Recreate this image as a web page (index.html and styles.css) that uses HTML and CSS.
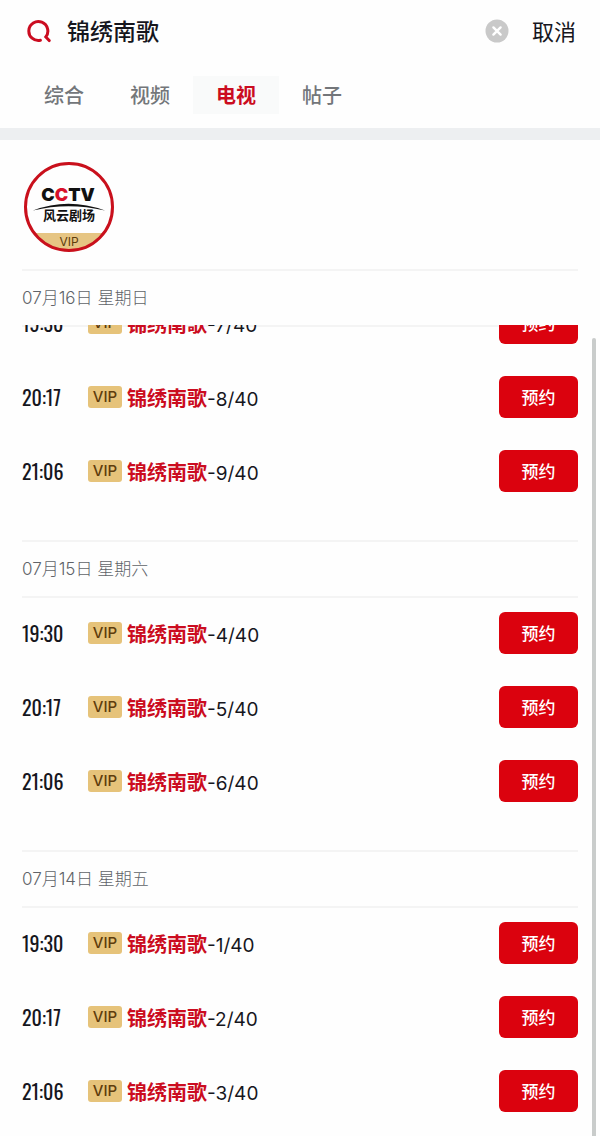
FILE: index.html
```html
<!DOCTYPE html>
<html lang="zh-CN">
<head>
    <meta charset="UTF-8">
    <meta name="viewport" content="width=device-width, initial-scale=1.0">
    <title>锦绣南歌</title>
    <link rel="stylesheet" href="styles.css">
</head>
<body>
    <div class="main">
        <form class="search">
            <label class="search-icon" for="keyword" aria-label="搜索">
                <svg width="24" height="24" viewBox="0 0 24 24" fill="none" stroke="#cb0c20" stroke-width="3" stroke-linecap="round">
                    <path d="M13.4 21.3A9.5 9.5 0 1 1 18.8 17.9L22.2 21.6"/>
                </svg>
            </label>
            <input class="keyword" id="keyword" type="text" value="锦绣南歌">
            <button class="clear" type="reset" aria-label="清除">
                <svg width="24" height="24" viewBox="0 0 24 24">
                    <circle cx="12" cy="12" r="11.5" fill="#c9c9c9"/>
                    <path d="M8.4 8.4L15.6 15.6M15.6 8.4L8.4 15.6" stroke="#fff" stroke-width="2.4" stroke-linecap="round"/>
                </svg>
            </button>
            <button class="cancel" type="button">取消</button>
        </form>

        <nav class="tabs">
            <a class="tab" href="#">综合</a>
            <a class="tab" href="#">视频</a>
            <a class="tab active" href="#">电视</a>
            <a class="tab" href="#">帖子</a>
        </nav>

        <div class="channels">
            <a class="channel" href="#" aria-label="CCTV风云剧场">
                <svg width="90" height="90" viewBox="0 0 90 90">
                    <clipPath id="round"><circle cx="45" cy="45" r="44"/></clipPath>
                    <rect y="71" width="90" height="19" fill="#e6c583" clip-path="url(#round)"/>
                    <circle cx="45" cy="45" r="43.5" fill="none" stroke="#c9101c" stroke-width="3"/>
                    <text class="cctv" x="44" y="39">C<tspan class="red">C</tspan>TV</text>
                    <path d="M9 48.5Q44 35 81 48.5Q44 40 9 48.5Z" fill="#111"/>
                    <text class="channel-name" x="45" y="58">风云剧场</text>
                    <text class="channel-vip" x="45" y="84">VIP</text>
                </svg>
            </a>
        </div>

        <div class="schedule">
            <section class="day current">
                <h2 class="date">07月16日 星期日</h2>
                <ul class="programs">
                    <li class="program">
                        <span class="time">19:30</span><span class="vip">VIP</span>
                        <span class="title"><em>锦绣南歌</em>-7/40</span>
                        <button class="book">预约</button>
                    </li>
                    <li class="program">
                        <span class="time">20:17</span><span class="vip">VIP</span>
                        <span class="title"><em>锦绣南歌</em>-8/40</span>
                        <button class="book">预约</button>
                    </li>
                    <li class="program">
                        <span class="time">21:06</span><span class="vip">VIP</span>
                        <span class="title"><em>锦绣南歌</em>-9/40</span>
                        <button class="book">预约</button>
                    </li>
                </ul>
            </section>
            <section class="day">
                <h2 class="date">07月15日 星期六</h2>
                <ul class="programs">
                    <li class="program">
                        <span class="time">19:30</span><span class="vip">VIP</span>
                        <span class="title"><em>锦绣南歌</em>-4/40</span>
                        <button class="book">预约</button>
                    </li>
                    <li class="program">
                        <span class="time">20:17</span><span class="vip">VIP</span>
                        <span class="title"><em>锦绣南歌</em>-5/40</span>
                        <button class="book">预约</button>
                    </li>
                    <li class="program">
                        <span class="time">21:06</span><span class="vip">VIP</span>
                        <span class="title"><em>锦绣南歌</em>-6/40</span>
                        <button class="book">预约</button>
                    </li>
                </ul>
            </section>
            <section class="day">
                <h2 class="date">07月14日 星期五</h2>
                <ul class="programs">
                    <li class="program">
                        <span class="time">19:30</span><span class="vip">VIP</span>
                        <span class="title"><em>锦绣南歌</em>-1/40</span>
                        <button class="book">预约</button>
                    </li>
                    <li class="program">
                        <span class="time">20:17</span><span class="vip">VIP</span>
                        <span class="title"><em>锦绣南歌</em>-2/40</span>
                        <button class="book">预约</button>
                    </li>
                    <li class="program">
                        <span class="time">21:06</span><span class="vip">VIP</span>
                        <span class="title"><em>锦绣南歌</em>-3/40</span>
                        <button class="book">预约</button>
                    </li>
                </ul>
            </section>
            <div class="scrollbar"></div>
        </div>
    </div>
</body>
</html>
```
FILE: styles.css
```css
*
{
    box-sizing: border-box;
    margin: 0;
    padding: 0;
}
body
{
    background: #fefefe;
    color: #16161d;
    font-family: Inter, "Noto Sans CJK SC", sans-serif;
}
button, input
{
    border: none;
    background: none;
    outline: none;
    font-family: inherit;
    color: inherit;
}
a
{
    text-decoration: none;
}
svg
{
    display: block;
}
.main
{
    height: 100vh;
    display: flex;
    flex-direction: column;
    overflow: hidden;
}

/* search bar */
.search
{
    display: flex;
    align-items: center;
    height: 62px;
    padding: 0 24px 0 27px;
}
.keyword
{
    flex: 1;
    min-width: 0;
    height: 40px;
    margin-left: 16px;
    padding-bottom: 2px;
    font-size: 23px;
    font-weight: 500;
}
.clear, .cancel
{
    cursor: pointer;
}
.cancel
{
    height: 40px;
    margin-left: 23px;
    padding-bottom: 3px;
    font-size: 22px;
}

/* tabs */
.tabs
{
    display: flex;
    padding: 14px 21px;
    border-bottom: 12px solid #edeff1;
}
.tab
{
    width: 86px;
    height: 38px;
    line-height: 40px;
    font-size: 20px;
    font-weight: 500;
    text-align: center;
    color: #73767a;
}
.tab.active
{
    background: #f9fafa;
    font-weight: 700;
    color: #cb0c20;
}

/* channel */
.channels
{
    display: flex;
    padding: 22px 24px 17px;
}
.cctv
{
    font: 900 18px Inter, sans-serif;
    text-anchor: middle;
    fill: #111;
}
.cctv .red
{
    fill: #d8102a;
}
.channel-name
{
    font: bold 13px "Noto Sans CJK SC", sans-serif;
    text-anchor: middle;
    fill: #111;
}
.channel-vip
{
    font: 12px Inter, sans-serif;
    text-anchor: middle;
    fill: #5e3d0c;
}

/* schedule */
.schedule
{
    position: relative;
    flex: 1;
    min-height: 0;
    overflow: hidden;
    padding: 0 22px;
}
.date
{
    height: 58px;
    line-height: 54px;
    border-top: 2px solid #f4f4f4;
    border-bottom: 2px solid #f4f4f4;
    font-size: 17px;
    font-weight: 300;
    color: #606368;
}
.programs
{
    display: flex;
    flex-direction: column;
    gap: 32px;
    padding: 14px 0 48px;
    list-style: none;
}
/* first day is scrolled partly under its date */
.current .programs
{
    margin-top: -2px;
    padding-top: 0;
    overflow: hidden;
}
.current .program:first-child
{
    margin-top: -23px;
}
.program
{
    display: flex;
    align-items: center;
    height: 42px;
}
.time
{
    width: 66px;
    font-family: "Oswald", "Roboto Condensed", "Liberation Sans Narrow", "Liberation Sans", sans-serif;
    font-size: 20px;
}
.vip
{
    width: 34px;
    height: 22px;
    line-height: 22px;
    margin-right: 5px;
    border-radius: 3px;
    background: #e6c37a;
    font-size: 15px;
    font-weight: 500;
    text-align: center;
    color: #5e3d0c;
}
.title
{
    flex: 1;
    font-size: 19px;
}
.title em
{
    font-size: 20px;
    font-style: normal;
    font-weight: 700;
    color: #cb0c20;
}
.book
{
    width: 79px;
    height: 42px;
    padding-bottom: 2px;
    border-radius: 6px;
    background: #db020e;
    font-size: 17px;
    font-weight: 500;
    color: #fff;
    cursor: pointer;
}
.scrollbar
{
    position: absolute;
    top: 69px;
    right: 4px;
    bottom: 0;
    width: 4px;
    border-radius: 2px 2px 0 0;
    background: #c9cccb;
}
```
